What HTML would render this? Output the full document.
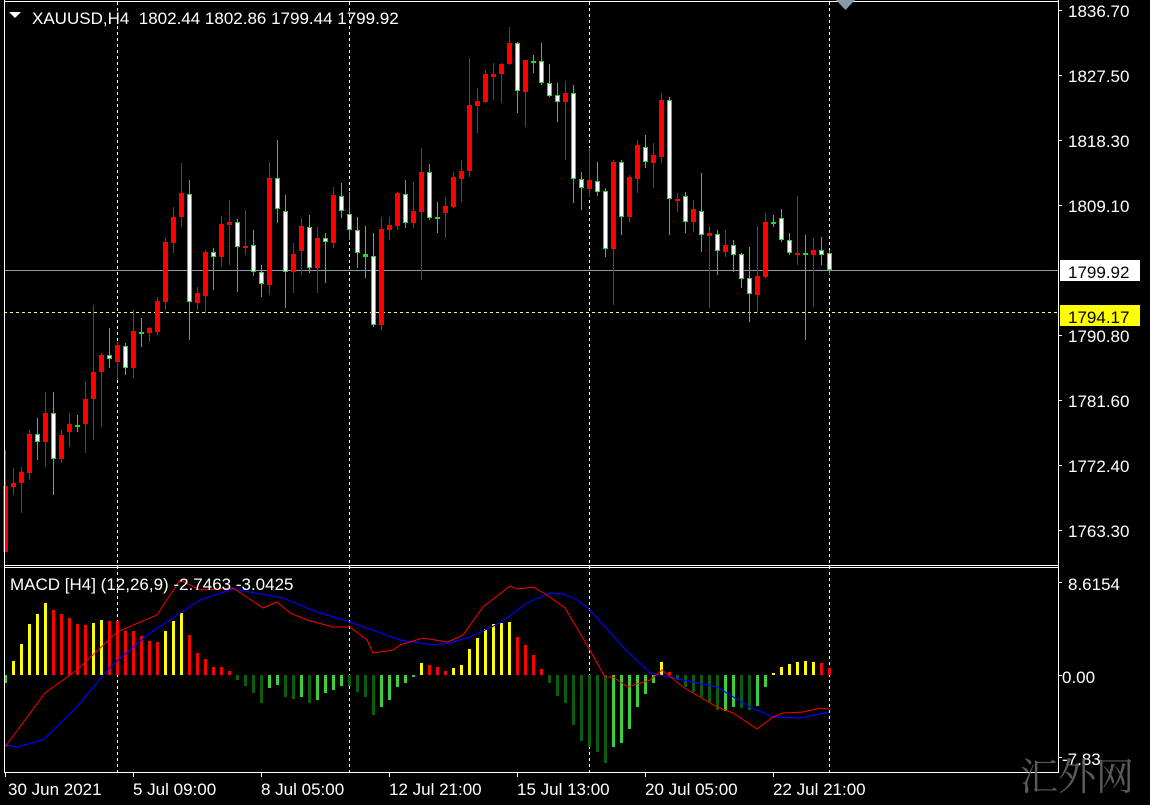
<!DOCTYPE html>
<html><head><meta charset="utf-8"><style>
html,body{margin:0;padding:0;background:#000;width:1150px;height:805px;overflow:hidden}
svg{display:block}
text{font-family:"Liberation Sans",sans-serif;font-size:17px;fill:#fff}
</style></head><body>
<svg id="s" width="1150" height="805" xmlns="http://www.w3.org/2000/svg">
<rect width="1150" height="805" fill="#000"/>
<g id="grid" stroke="#fff" stroke-width="1" stroke-dasharray="3,3">
<line x1="117.5" y1="2" x2="117.5" y2="772"/>
<line x1="349.5" y1="2" x2="349.5" y2="772"/>
<line x1="589.5" y1="2" x2="589.5" y2="772"/>
<line x1="829.5" y1="2" x2="829.5" y2="772"/>
</g>
<line x1="4" y1="270.5" x2="1058" y2="270.5" stroke="#8c9aa6" stroke-width="1"/>
<line x1="4" y1="312.5" x2="1058" y2="312.5" stroke="#ffff66" stroke-width="1" stroke-dasharray="3,3"/>
<g id="c"></g>
<g id="h"></g>
<polyline fill="none" stroke="#0000ff" stroke-width="1.2" points="5,745 17,747 43,740 77,707 110,667 150,633 200,600 233,589 283,598 317,612 350,622 400,640 433,645 450,643 470,637 500,623 527,603 550,593 563,594 577,600 590,610 623,647 650,673 683,680 717,687 750,707 773,717 800,718 829,712"/>
<polyline fill="none" stroke="#ff0000" stroke-width="1" points="5,747 45,693 77,670 117,632 157,615 180,580 200,590 233,588 263,608 277,602 290,613 307,620 333,627 350,627 367,640 373,653 393,650 400,645 423,638 447,642 450,641 463,635 483,607 510,586 518,589 533,587 547,595 565,608 587,645 605,677 613,677 628,687 650,680 662,670 683,687 717,707 733,713 757,729 773,717 783,713 803,712 820,708 829,709"/>
<g stroke="#fff" stroke-width="1" fill="none">
<line x1="4.5" y1="0" x2="4.5" y2="773"/>
<line x1="4" y1="1.5" x2="1058" y2="1.5"/>
<line x1="1058.5" y1="0" x2="1058.5" y2="773"/>
<line x1="4" y1="565.5" x2="1058" y2="565.5"/>
<line x1="4" y1="567.5" x2="1058" y2="567.5"/>
<line x1="4" y1="772.5" x2="1058" y2="772.5"/>
</g>
<polygon points="836,0 855,0 845.5,10" fill="#8a99a6"/>
<polygon points="9,12 21,12 15,18" fill="#fff"/>
<text x="32" y="24">XAUUSD,H4&#160;&#160;1802.44 1802.86 1799.44 1799.92</text>
<text x="10" y="590">MACD [H4] (12,26,9) -2.7463 -3.0425</text>
<g id="ax" stroke="#fff"></g>
<g id="axt"></g>
<rect x="1060" y="260" width="80" height="21" fill="#fff"/>
<text x="1068" y="278" style="fill:#000">1799.92</text>
<rect x="1060" y="305" width="80" height="21" fill="#ffff00"/>
<text x="1068" y="323" style="fill:#000">1794.17</text>
<text x="1068" y="590">8.6154</text>
<text x="1062" y="683">0.00</text>
<text x="1062" y="765">-7.83</text>
<text x="8" y="795">30 Jun 2021</text>
<text x="133" y="795">5 Jul 09:00</text>
<text x="261" y="795">8 Jul 05:00</text>
<text x="389" y="795">12 Jul 21:00</text>
<text x="517" y="795">15 Jul 13:00</text>
<text x="645" y="795">20 Jul 05:00</text>
<text x="773" y="795">22 Jul 21:00</text>
<text x="1020" y="790" style="font-family:'Noto Serif CJK SC',serif;font-size:38px;fill:#6a6a6a;opacity:0.85">汇外网</text>
</svg>
<script>
var NS="http://www.w3.org/2000/svg";
function el(p,t,a){var e=document.createElementNS(NS,t);for(var k in a)e.setAttribute(k,a[k]);p.appendChild(e);return e;}
var C="R 486 552 450 552|R 483 487 468 495|R 472 483 467 513|R 434 473 430 480|G 434 442 418 460|R 413 442 392 467|G 413 459 392 495|R 435 459 430 463|R 424 432 413 447|G 425 426 415 432|R 399 424 382 453|R 372 399 305 440|R 355 372 353 427|G 355 359 328 368|R 345 362 342 380|G 346 368 343 375|R 331 368 310 378|G 332 333 318 347|R 328 333 327 342|R 301 332 297 335|R 242 302 238 310|R 217 243 207 253|R 193 217 163 227|G 194 302 180 340|R 293 303 287 310|R 252 296 250 313|G 252 257 248 290|R 224 257 216 267|R 222 225 200 265|G 222 247 219 292|R 246 248 210 255|G 245 272 230 276|G 272 284 265 297|R 178 285 162 295|G 178 209 140 223|G 211 272 195 308|R 254 272 243 293|R 226 251 218 275|G 227 268 215 273|R 238 268 227 293|G 238 242 233 283|R 195 243 187 248|G 196 211 183 218|G 214 230 192 240|G 230 253 217 268|G 254 257 226 278|G 256 325 233 327|R 229 325 217 330|R 225 230 217 240|R 193 226 192 230|G 194 223 180 228|R 211 223 182 228|R 172 212 148 280|G 172 218 164 220|G 217 218 202 233|R 206 213 197 238|R 177 207 172 208|R 171 179 160 202|R 105 171 58 177|R 101 106 88 133|R 74 102 70 103|R 74 77 63 100|R 64 74 63 103|R 43 64 27 65|G 43 91 42 113|R 60 92 60 127|G 61 62 55 73|G 61 83 43 85|G 83 96 64 97|G 95 102 83 122|R 93 102 81 160|G 93 179 85 203|G 179 188 172 210|R 180 189 148 197|G 181 192 162 196|G 191 249 188 257|R 162 249 160 305|G 162 217 160 235|R 177 217 175 222|R 145 179 140 193|G 147 162 135 168|R 155 163 143 188|R 100 157 93 163|G 100 199 97 235|R 199 201 193 212|G 196 222 192 233|R 209 222 200 232|G 211 235 173 252|R 233 236 226 308|G 234 251 230 275|R 245 252 230 257|G 245 255 240 272|G 254 279 253 288|G 278 294 247 322|R 276 295 226 313|R 222 277 213 278|G 222 223 215 227|G 218 240 209 242|G 240 253 233 255|R 253 254 196 265|G 253 254 235 340|R 250 255 238 307|G 250 255 237 265|G 253 270 250 275".split("|");
var g=document.getElementById("c");
C.forEach(function(s,i){var p=s.split(" "),x=5+8*i,t=+p[1],b=+p[2],wt=+p[3],wb=+p[4];
 if(p[0]=="R"){el(g,"line",{x1:x+.5,y1:wt,x2:x+.5,y2:wb,stroke:"#ff0000"});el(g,"rect",{x:x-2,y:t,width:5,height:Math.max(2,b-t),fill:"#ff0000"});}
 else{el(g,"line",{x1:x+.5,y1:wt,x2:x+.5,y2:wb,stroke:"#22dd22"});el(g,"rect",{x:x-2,y:t,width:5,height:Math.max(2,b-t),fill:"#22dd22"});if(b-t>3)el(g,"rect",{x:x-1,y:t+1,width:3,height:b-t-2,fill:"#fff"});}
});
var H="683L 661Y 644Y 624Y 614Y 603Y 610R 614R 618R 624R 625R 623Y 620Y 621R 621R 631R 631R 636R 641R 642R 631Y 621Y 613Y 635R 653R 659R 667R 667R 671R 680D 686D 693D 703D 688L 685L 697D 699D 697L 703D 700L 693L 690L 686L 686D 692D 697D 715D 707L 700L 687L 683L 677L 663Y 665R 667R 671R 668Y 665Y 649Y 638Y 629Y 624Y 623Y 622Y 637R 645R 655R 669R 683D 696D 703D 725D 741D 747D 752D 763D 747L 743L 729L 707L 694L 683L 662Y 672R 680D 687D 692D 697D 702D 710D 711L 707L 708D 710D 706L 687L 673Y 667Y 664Y 662Y 661Y 662Y 663R 668R".split(" ");
var cols={Y:"#ffff00",R:"#ff0000",D:"#0b5e0b",L:"#3ccf3c"};
var h=document.getElementById("h");
H.forEach(function(s,i){var y=+s.slice(0,-1),c=cols[s.slice(-1)],x=5+8*i-1;var z=675;
 var a=Math.min(y,z),b=Math.max(y,z);el(h,"rect",{x:x,y:a,width:3,height:Math.max(2,b-a),fill:c});});
var ax=document.getElementById("ax"),axt=document.getElementById("axt");
[["1836.70",10],["1827.50",75],["1818.30",140],["1809.10",205],["1790.80",335],["1781.60",400],["1772.40",465],["1763.30",530]].forEach(function(a){
 el(ax,"line",{x1:1058,y1:a[1]+.5,x2:1062,y2:a[1]+.5});
 var t=el(axt,"text",{x:1068,y:a[1]+7});t.textContent=a[0];});
[582,675,757].forEach(function(y){el(ax,"line",{x1:1058,y1:y+.5,x2:1062,y2:y+.5});});
[5,133,261,389,517,645,773].forEach(function(x){el(ax,"line",{x1:x+.5,y1:772,x2:x+.5,y2:777});});
</script>
</body></html>
